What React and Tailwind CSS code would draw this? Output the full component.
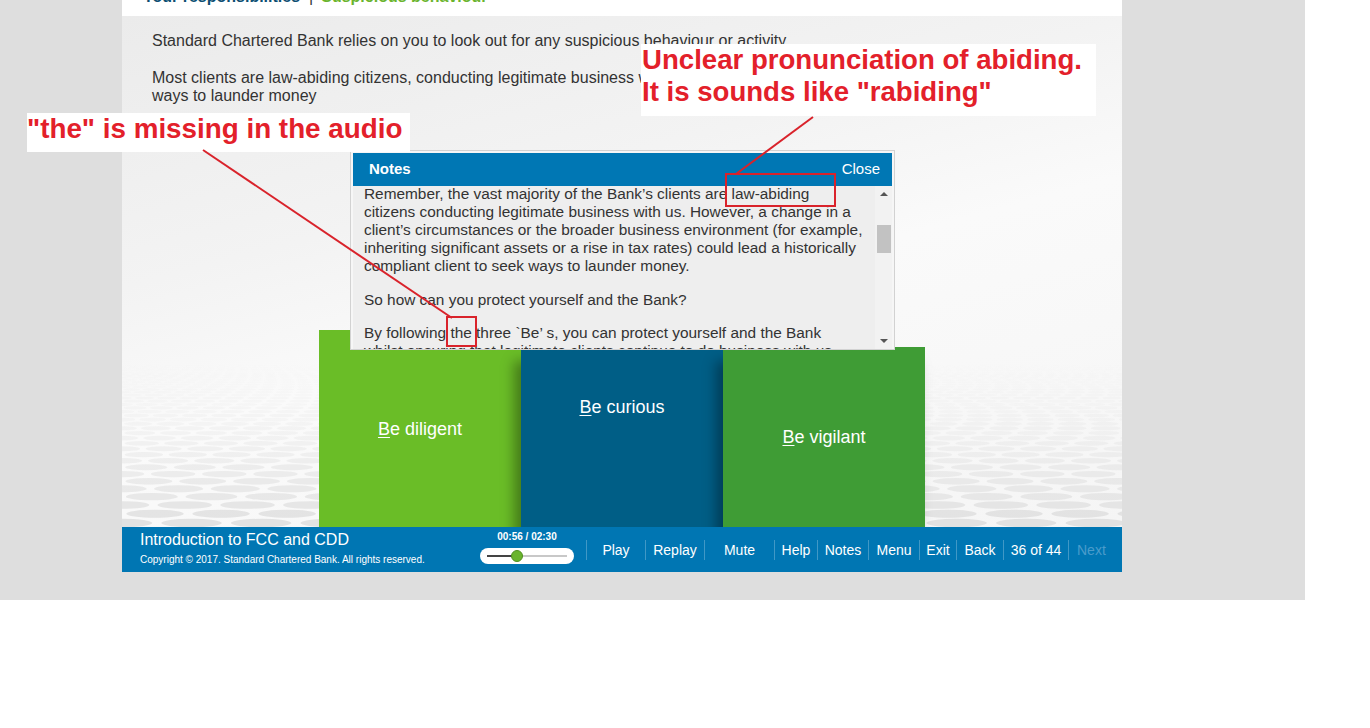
import React from "react";

const navItems = [
  { label: "Play", w: "w-[59px]" },
  { label: "Replay", w: "w-[59px]" },
  { label: "Mute", w: "w-[70px]" },
  { label: "Help", w: "w-[43px]" },
  { label: "Notes", w: "w-[51px]" },
  { label: "Menu", w: "w-[51px]" },
  { label: "Exit", w: "w-[37px]" },
  { label: "Back", w: "w-[47px]" },
  { label: "36 of 44", w: "w-[65px]" },
];

// rows of ellipses for the floor pattern at the bottom of the stage
const buildDots = () => {
  const dots = [];
  let y = 507;
  let ry = 4.2;
  let row = 0;
  while (ry > 0.6) {
    const rx = ry * 7.2;
    const step = rx * 2.3;
    const offset = row % 2 === 0 ? 0 : step / 2;
    const alpha = Math.pow(ry / 4.2, 1.8) * 0.8;
    for (let x = -step + offset; x < 1000 + step; x += step) {
      dots.push({ cx: x, cy: y, rx, ry, o: alpha });
    }
    y -= ry * 2.2;
    ry *= 0.95;
    row++;
  }
  return dots;
};
const dots = buildDots();

const Card = ({ color, height, children, top, shadow }) => (
  <div className={`${color} ${height} w-[202px] flex justify-center ${top ? "items-start pt-[50px]" : "items-center"} ${shadow ? "shadow-[-7px_14px_12px_rgba(0,0,0,0.35)]" : ""}`}>
    <span className="text-white text-[18px] leading-[20px]">
      <span className="underline underline-offset-2">B</span>e {children}
    </span>
  </div>
);

const App = () => {
  return (
    <div className="relative w-[1370px] h-[728px] bg-white overflow-hidden font-['Liberation_Sans',Arial,sans-serif]">
      <div className="w-[1305px] h-[600px] bg-[#dedede] pl-[122px]">
        <div className="w-[1000px] h-[572px] flex flex-col">
          {/* title strip, scrolled out of view above */}
          <div className="h-[16px] bg-white overflow-hidden shrink-0">
            <div className="-mt-[12px] pl-[21px] flex items-center text-[16px] leading-[18px] font-bold whitespace-nowrap">
              <span className="text-[#0c4e72]">Your responsibilities</span>
              <span className="ml-[9px] mr-[8px] font-normal text-[#333]">|</span>
              <span className="text-[#6ab42d]">Suspicious behaviour</span>
            </div>
          </div>

          {/* stage */}
          <div className="flex-1 grid bg-[linear-gradient(165deg,#ebebeb_0%,#f3f3f3_35%,#fafafa_55%,#f5f5f5_100%)]">
            <svg className="[grid-area:1/1] w-[1000px] h-[511px]" viewBox="0 0 1000 511">
              {dots.map((d, i) => (
                <ellipse key={i} cx={d.cx} cy={d.cy} rx={d.rx} ry={d.ry} fill="#dcdcdc" fillOpacity={d.o} />
              ))}
            </svg>
            <div className="[grid-area:1/1] flex flex-col h-[511px]">
              <div className="pt-[16px] pl-[30px] text-[16px] leading-[18px] text-[#333] whitespace-nowrap">
                <p>Standard Chartered Bank relies on you to look out for any suspicious behaviour or activity</p>
                <p className="mt-[19px]">
                  Most clients are law-abiding citizens, conducting legitimate business with us. However, some may seek
                  <br />
                  ways to launder money
                </p>
              </div>
              <div className="mt-auto ml-[197px] flex items-end">
                <Card color="bg-[#6abd27]" height="h-[197px]">diligent</Card>
                <Card color="bg-[#005e86]" height="h-[180px]" top shadow>curious</Card>
                <Card color="bg-[#3f9c35]" height="h-[180px]" shadow>vigilant</Card>
              </div>
            </div>
          </div>

          {/* player bar */}
          <div className="h-[45px] shrink-0 bg-[#0076b3] flex text-white">
            <div className="w-[358px] pl-[18px] pt-[4px]">
              <div className="text-[16px] leading-[18px]">Introduction to FCC and CDD</div>
              <div className="mt-[5px] text-[10px] leading-[12px]">Copyright © 2017. Standard Chartered Bank. All rights reserved.</div>
            </div>
            <div className="w-[94px] pt-[4px] flex flex-col items-center">
              <div className="text-[10px] leading-[12px] font-bold">00:56 / 02:30</div>
              <div className="mt-[5px] w-[94px] h-[16px] bg-white rounded-full flex items-center px-[7px]">
                <div className="w-[30px] h-[2px] bg-[#444]" />
                <div className="w-[12px] h-[12px] -mx-[6px] rounded-full bg-[#6ab42d] border border-[#4f8f1f] relative" />
                <div className="flex-1 h-[2px] bg-[#c8c8c8]" />
              </div>
            </div>
            <div className="ml-[12px] flex items-center text-[14px] leading-[18px]">
              {navItems.map((n) => (
                <div key={n.label} className={`${n.w} h-[20px] border-l border-white/25 flex items-center justify-center`}>
                  {n.label}
                </div>
              ))}
              <div className="w-[52px] h-[20px] border-l border-white/25 flex items-center pl-[8px] text-[#4a9ccb]">Next</div>
            </div>
          </div>
        </div>
      </div>

      {/* notes popup */}
      <div className="absolute left-[350px] top-[150px] w-[545px] h-[200px] bg-[#f6f6f6] border border-[#d2d2d2] pt-[2px] px-[2px] flex flex-col">
        <div className="h-[33px] bg-[#0077b4] flex items-center justify-between pl-[16px] pr-[12px] text-white text-[15px] shrink-0">
          <span className="font-bold">Notes</span>
          <span>Close</span>
        </div>
        <div className="flex-1 flex overflow-hidden bg-[#eeeeee]">
          <div className="flex-1 overflow-hidden pl-[11px] text-[15.4px] leading-[18px] text-[#333] whitespace-nowrap">
            <div className="-mt-[1px]">
              <p>
                Remember, the vast majority of the Bank’s clients are law-abiding
                <br />
                citizens conducting legitimate business with us. However, a change in a
                <br />
                client’s circumstances or the broader business environment (for example,
                <br />
                inheriting significant assets or a rise in tax rates) could lead a historically
                <br />
                compliant client to seek ways to launder money.
              </p>
              <p className="mt-[16px]">So how can you protect yourself and the Bank?</p>
              <p className="mt-[15px]">
                By following the three `Be’ s, you can protect yourself and the Bank
                <br />
                whilst ensuring that legitimate clients continue to do business with us.
              </p>
            </div>
          </div>
          <div className="w-[17px] bg-[#f2f2f2] flex flex-col items-center justify-between py-[6px]">
            <div className="w-0 h-0 border-l-[4px] border-r-[4px] border-b-[4px] border-l-transparent border-r-transparent border-b-[#555]" />
            <div className="w-[14px] h-[28px] bg-[#c2c2c2] mb-auto mt-[29px]" />
            <div className="w-0 h-0 border-l-[4px] border-r-[4px] border-t-[4px] border-l-transparent border-r-transparent border-t-[#555]" />
          </div>
        </div>
      </div>

      {/* review annotations */}
      <div className="absolute left-[641px] top-[44px] w-[455px] h-[72px] bg-white pl-[1px] text-[#e3202a] font-bold text-[27.6px] leading-[32px] whitespace-nowrap">
        <div>Unclear pronunciation of abiding.</div>
        <div>It is sounds like "rabiding"</div>
      </div>
      <div className="absolute left-[27px] top-[113px] w-[383px] h-[39px] bg-white text-[#e3202a] font-bold text-[27.8px] leading-[32px] whitespace-nowrap">
        "the" is missing in the audio
      </div>
      <svg className="absolute inset-0 pointer-events-none" width="1370" height="728">
        <line x1="813" y1="117" x2="736" y2="174" stroke="#d9232b" strokeWidth="2" />
        <line x1="203" y1="150" x2="452" y2="318" stroke="#d9232b" strokeWidth="2" />
        <rect x="726" y="174" width="109" height="32" fill="none" stroke="#d9232b" strokeWidth="2" />
        <rect x="447" y="317" width="29" height="29" fill="none" stroke="#d9232b" strokeWidth="2" />
      </svg>
    </div>
  );
};

export default App;
